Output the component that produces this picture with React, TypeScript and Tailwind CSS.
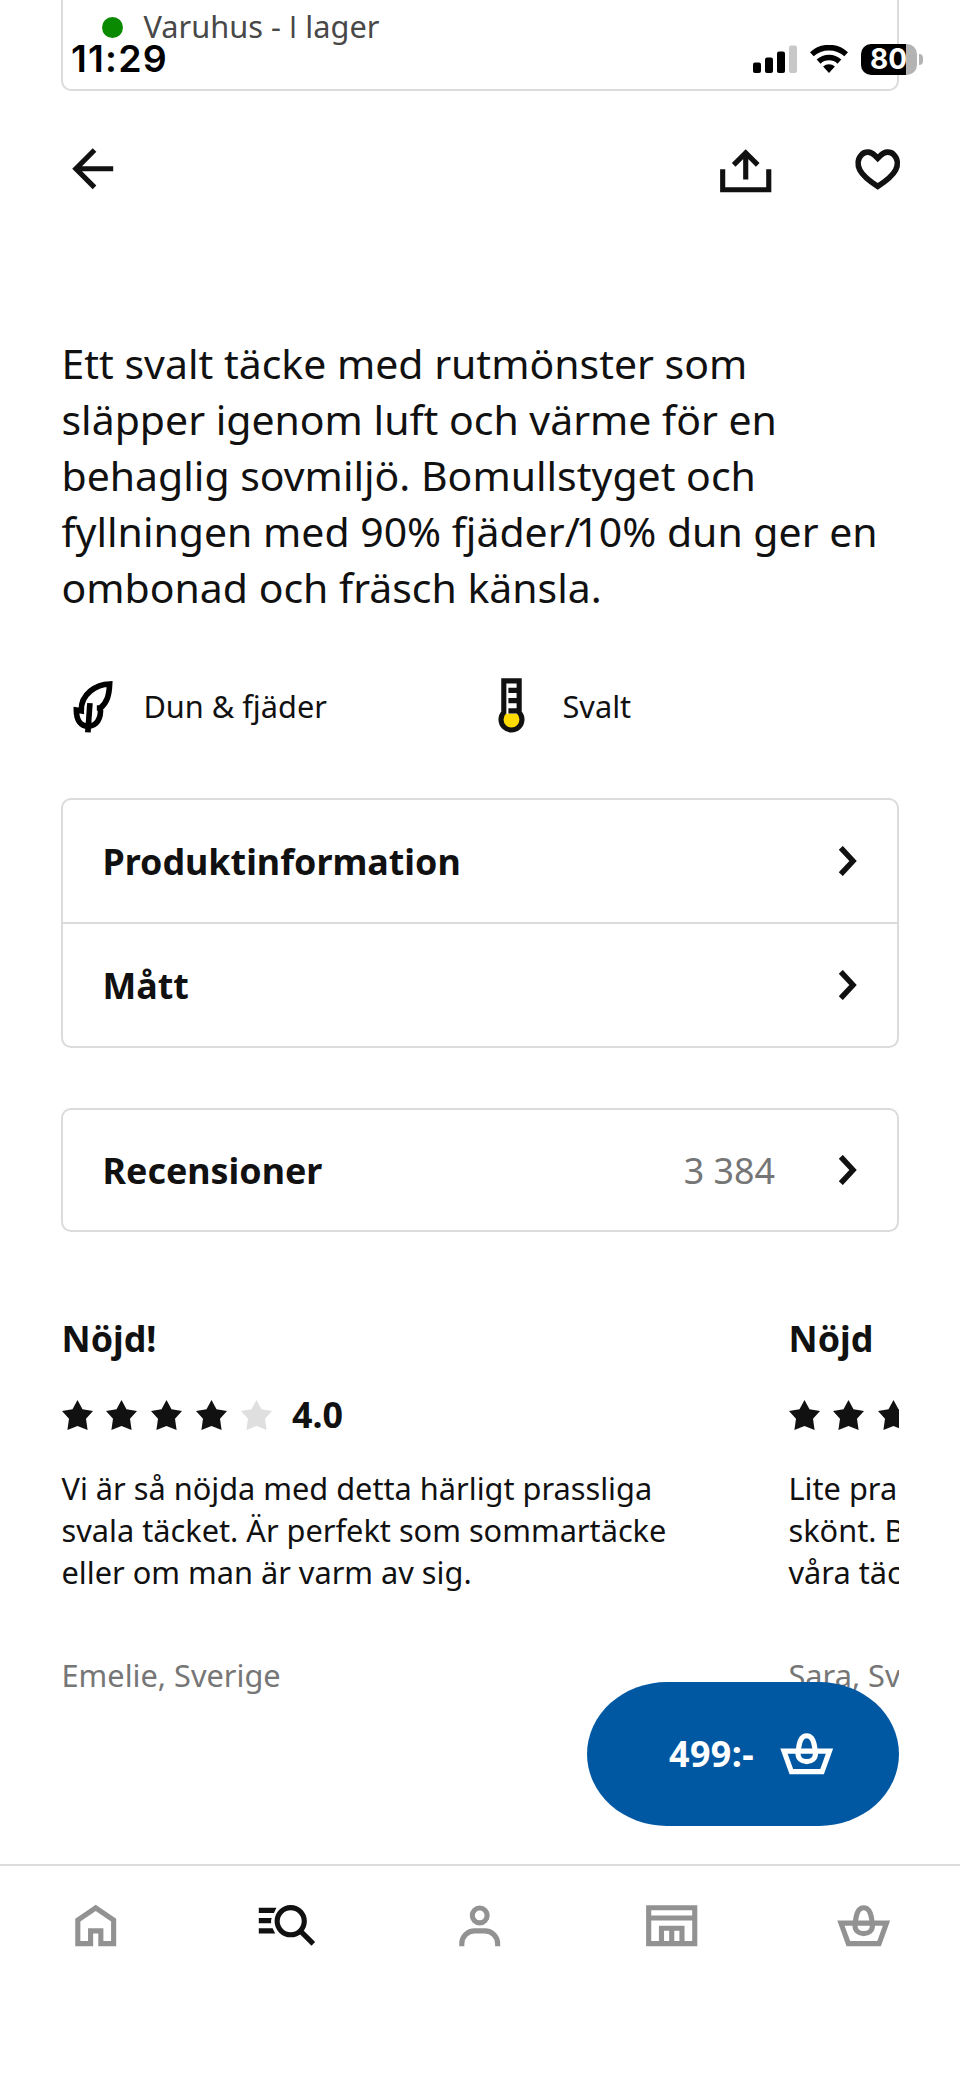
import type { ReactNode } from "react";

type IconProps = { className?: string };

function Icon({ children, className = "" }: { children: ReactNode; className?: string }) {
    return (
        <svg
            viewBox="0 0 24 24"
            fill="none"
            stroke="currentColor"
            strokeWidth={2}
            strokeMiterlimit={10}
            className={`size-[61.44px] shrink-0 ${className}`}
        >
            {children}
        </svg>
    );
}

function ArrowLeftIcon() {
    return (
        <Icon>
            <path d="m4 12 8 8 1.414-1.414L7.829 13H20v-2H7.829l5.585-5.586L12 4z" fill="currentColor" stroke="none" />
        </Icon>
    );
}

function ShareIcon() {
    return (
        <Icon>
            <path d="M3 12.200v8h18v-8" />
            <path d="M12 5.800v10.400M7.300 10.500 12 5.800l4.700 4.700" />
        </Icon>
    );
}

function HeartIcon() {
    return (
        <Icon>
            <path
                strokeWidth={2.2}
                d="M12 7.900 10.900 6.800C9.300 5.200 7.100 5.100 5.700 6.500 4.100 8.100 4 10.500 5 12.500c1.300 2.500 3.900 4.400 7 6.400 3.100-2 5.700-3.900 7-6.400 1-2 .9-4.400-.7-6-1.400-1.400-3.600-1.300-5.200.3z"
            />
        </Icon>
    );
}

function HomeIcon() {
    return (
        <Icon>
            <path d="M12 5l7 4.8V19h-5v-5h-4v5H5V9.8z" />
        </Icon>
    );
}

function SearchIcon() {
    return (
        <Icon>
            <path d="M.7 5h6.9l-1 2H.7zM.7 9h5l-.2 1v1H.7zM.7 13h5.4l1 2H.7z" fill="currentColor" stroke="none" />
            <circle cx="13.17" cy="10.25" r="5.3" />
            <path d="M17 14.1l5 5" />
        </Icon>
    );
}

function PersonIcon() {
    return (
        <Icon>
            <circle cx="12" cy="8" r="2.9" />
            <path d="M5 20v-1a5 5 0 0 1 5-5h4a5 5 0 0 1 5 5v1" />
        </Icon>
    );
}

function StoreIcon() {
    return (
        <Icon>
            <path d="M3 5h18v14H3zM3 9h18M8 19v-6h8v6M12 13v6" />
        </Icon>
    );
}

function BasketIcon({ className }: IconProps) {
    return (
        <Icon className={className}>
            <path d="M3.1 11h17.8L18 19H6z" />
            <path d="M12 5c-1.9 0-2.7 1.6-3.1 4.4-.2 1.4-.3 1.9-.3 2.6 0 1.8 1.4 3.1 3.4 3.1s3.4-1.3 3.4-3.1c0-.7-.1-1.2-.3-2.6C14.7 6.6 13.9 5 12 5z" />
        </Icon>
    );
}

function LeafIcon() {
    return (
        <Icon className="text-black">
            <g strokeWidth={2.2}>
                <path d="M19 3.5C14 3.6 7.7 7.2 7.9 14L6 13.7c0 3.9 1.6 6.3 4.6 6.3 3.4 0 5.1-3 4.8-7.1 2.6-2.1 3.4-4.9 3.6-9.4zM15.4 12.9H14" />
                <path d="M10.5 22.4 11.3 11" />
            </g>
        </Icon>
    );
}

function ThermometerIcon() {
    return (
        <Icon>
            <path d="M9.3 15.1h6a4.1 4.1 0 1 1-6 0z" fill="#ffdb00" stroke="none" />
            <path d="M15.3 14.6a4.1 4.1 0 1 1-6 0V2.3h6z" />
            <path d="M11.1 6h4.2M11.1 10h4.2M11.1 14h4.2" />
        </Icon>
    );
}

function Chevron() {
    return (
        <svg viewBox="0 0 18 30" className="h-[30px] w-[18px]" fill="none" stroke="#111" strokeWidth="5.5">
            <path d="M1.8 1.8 14 15 1.8 28.2" />
        </svg>
    );
}

function Star({ filled }: { filled: boolean }) {
    return (
        <svg viewBox="0 0 31 30" className={`h-[30px] w-[31px] ${filled ? "text-[#111]" : "text-[#dfdfdf]"}`}>
            <path fill="currentColor" d="M15.5 0l5 9.2L31 11l-7 7.8L25.6 30l-10.1-4-10.1 4L7 18.8 0 11l10.5-1.8z" />
        </svg>
    );
}

function StatusBar() {
    return (
        <div className="absolute inset-x-0 top-[38px] flex h-[42px] items-center pl-[71px] text-black">
            <span className="w-[681.5px] font-[Inter] text-[37.5px] font-semibold tracking-[1.2px]">11:29</span>
            <svg viewBox="0 0 44 28" className="h-[28px] w-[44px]">
                <rect x="0" y="17.5" width="8" height="10.5" rx="2" />
                <rect x="12" y="12.5" width="8" height="15.5" rx="2" />
                <rect x="24" y="6.5" width="8" height="21.5" rx="2" />
                <rect x="36" y="0.5" width="8" height="27.5" rx="2" fill="#c8c8c8" />
            </svg>
            <svg viewBox="0 0 38 28" className="ml-[13px] h-[28px] w-[38px]" fill="none" stroke="currentColor" strokeWidth="5.6">
                <path d="M1.8 9.3a25.4 25.4 0 0 1 34.4 0" />
                <path d="M8.6 16.6a15.4 15.4 0 0 1 20.8 0" />
                <path d="M13.1 21.6a8.7 8.7 0 0 1 11.8 0L19 28z" fill="currentColor" stroke="none" />
            </svg>
            <div className="ml-[13px] flex h-[31px] w-[56px] items-center justify-center overflow-hidden rounded-[10px] bg-gradient-to-r from-black from-[45.5px] to-[#b3b3b3] to-[45.5px] font-[Inter] text-[28px] font-bold text-white">
                80
            </div>
            <div className="ml-[2px] h-[11px] w-[4px] rounded-r-full bg-[#b3b3b3]" />
        </div>
    );
}

function LinkRow({ label, value }: { label: string; value?: string }) {
    return (
        <div className="flex h-[122px] items-center pr-[40.5px] pl-[39.5px] text-[35.84px]">
            <span className="grow pt-[1px] font-bold">{label}</span>
            {value && <span className="mr-[63.5px] pt-[1px] text-[#767676]">{value}</span>}
            <Chevron />
        </div>
    );
}

type Review = { title: string; stars: number; score?: string; lines: string[]; author: string };

const reviews: Review[] = [
    {
        title: "Nöjd!",
        stars: 4,
        score: "4.0",
        lines: ["Vi är så nöjda med detta härligt prassliga", "svala täcket. Är perfekt som sommartäcke", "eller om man är varm av sig."],
        author: "Emelie, Sverige",
    },
    {
        title: "Nöjd",
        stars: 5,
        lines: ["Lite pra", "skönt. B", "våra täc"],
        author: "Sara, Sv",
    },
];

function ReviewCard({ review }: { review: Review }) {
    return (
        <div className="w-[727px] shrink-0 whitespace-nowrap">
            <h3 className="text-[35.84px] leading-[48px] font-bold">{review.title}</h3>
            <div className="mt-[27.5px] flex h-[48px] items-center gap-[13.8px]">
                {[1, 2, 3, 4, 5].map((n) => (
                    <Star key={n} filled={n <= review.stars} />
                ))}
                {review.score && <span className="ml-[6.5px] text-[35.84px] leading-[48px] font-bold">{review.score}</span>}
            </div>
            <div className="mt-[28.5px] text-[30.72px] leading-[42px]">
                {review.lines.map((line) => (
                    <p key={line}>{line}</p>
                ))}
            </div>
            <p className="mt-[61px] text-[30.72px] leading-[42px] text-[#767676]">{review.author}</p>
        </div>
    );
}

export default function App() {
    return (
        <div className="relative flex h-[2079px] w-[960px] flex-col overflow-hidden bg-white font-['Noto_Sans',sans-serif] text-[#111]">
            <StatusBar />

            <main className="h-[1864px] shrink-0 overflow-hidden px-[61px]">
                {/* Stock status */}
                <div className="flex h-[91px] items-start rounded-b-[10px] border-2 border-t-0 border-[#dbdbdb] pl-[39px]">
                    <div className="mt-[17px] size-[21px] rounded-full bg-[#0a8a00]" />
                    <span className="ml-[20.5px] pt-[5px] text-[30.72px] leading-[42px] text-[#484848]">
                        Varuhus - <span className="font-['Open_Sans']">I</span> lager
                    </span>
                </div>

                {/* Toolbar */}
                <div className="mt-[46.5px] -mr-[9.5px] flex h-[62px] items-center pl-[0.5px]">
                    <ArrowLeftIcon />
                    <div className="ml-auto flex gap-[71px]">
                        <ShareIcon />
                        <HeartIcon />
                    </div>
                </div>

                <p className="mt-[135.5px] pl-[0.5px] text-[40.96px] leading-[56px] whitespace-nowrap">
                    Ett svalt täcke med rutmönster som<br />
                    släpper igenom luft och värme för en<br />
                    behaglig sovmiljö. Bomullstyget och<br />
                    fyllningen med 90% fjäder<span className="tracking-[-4.5px]">/</span>10% dun ger en<br />
                    ombonad och fräsch känsla.
                </p>

                <div className="mt-[60px] grid h-[60px] grid-cols-2 items-center text-[30.72px]">
                    <div className="flex items-center gap-[21px]">
                        <LeafIcon />
                        Dun &amp; fjäder
                    </div>
                    <div className="flex items-center gap-[21px]">
                        <ThermometerIcon />
                        Svalt
                    </div>
                </div>

                <div className="mt-[63px] rounded-[10px] border-2 border-[#dbdbdb]">
                    <LinkRow label="Produktinformation" />
                    <div className="h-[2px] bg-[#dbdbdb]" />
                    <LinkRow label="Mått" />
                </div>

                <div className="mt-[60px] flex h-[124px] flex-col justify-center rounded-[10px] border-2 border-[#dbdbdb]">
                    <LinkRow label="Recensioner" value={"3\u00a0384"} />
                </div>

                {/* Reviews */}
                <div className="mt-[83px] flex overflow-hidden pl-[0.5px]">
                    {reviews.map((review) => (
                        <ReviewCard key={review.title} review={review} />
                    ))}
                </div>
            </main>

            <button className="absolute top-[1682px] left-[587px] flex h-[143.5px] w-[312px] items-center rounded-[80px/72px] bg-[#0058a3] pl-[82px] text-[35.84px] font-bold tracking-[0.4px] text-white">
                499:-
                <BasketIcon className="ml-[21.5px]" />
            </button>

            <nav className="grid h-[215px] grid-cols-5 justify-items-center border-t-2 border-[#dbdbdb] pt-[29px] text-[#929292]">
                <HomeIcon />
                <div className="text-[#111]">
                    <SearchIcon />
                </div>
                <PersonIcon />
                <StoreIcon />
                <BasketIcon />
            </nav>
        </div>
    );
}
